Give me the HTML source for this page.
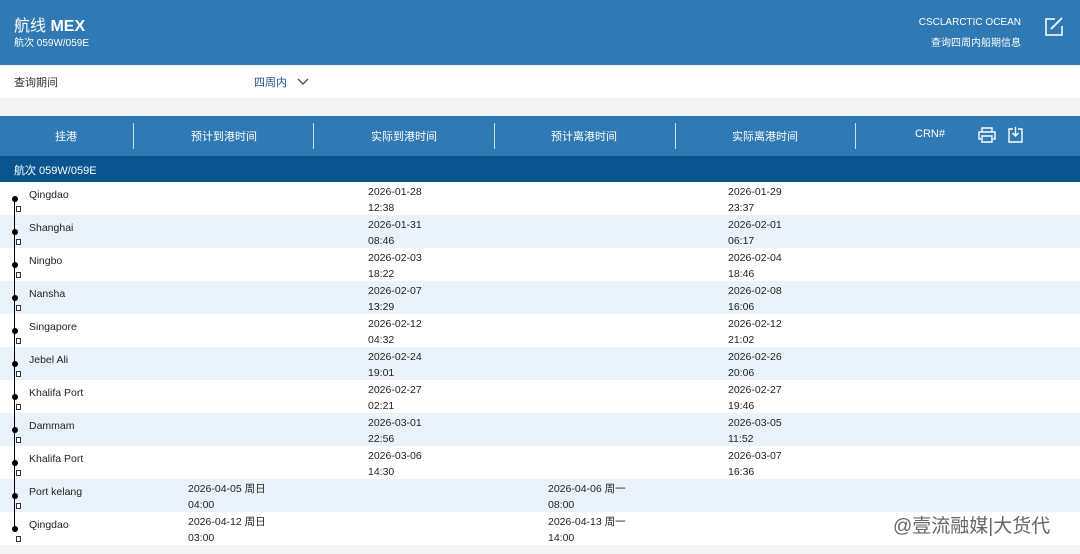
<!DOCTYPE html>
<html><head><meta charset="utf-8"><style>
*{margin:0;padding:0;box-sizing:border-box}
body{width:1080px;height:554px;overflow:hidden;background:#f3f4f6;font-family:"Liberation Sans","Noto Sans CJK SC",sans-serif;position:relative}
.hdr{position:absolute;left:0;top:0;width:1080px;height:65px;background:#2f79b4;color:#fff}
.q{position:absolute;top:66px;left:0;width:1080px;height:32px;background:#fff;font-size:11px;color:#333}
.th{position:absolute;top:116px;left:0;width:1080px;height:40px;background:#2f79b4;color:#fff;font-size:11px}
.th span{position:absolute;top:12px;transform:translateX(-50%)}
.sep{position:absolute;top:7px;width:1px;height:26px;background:#cfe0f0}
.vb{position:absolute;top:156px;left:0;width:1080px;height:26px;background:#0b558f;color:#fff;font-size:11px;padding:6px 14px}
.row{position:absolute;left:0;width:1080px;height:33px;font-size:10.5px;color:#222}
.row .p{position:absolute;left:29px;top:7px}
.row .t{position:absolute;top:2px;line-height:16px}
.dot{position:absolute;left:12px;top:14px;width:6px;height:6px;border-radius:50%;background:#000;z-index:3}
.sq{position:absolute;left:16px;top:24px;width:5px;height:6px;border:1px solid #333;background:#fff}
.line{position:absolute;left:14px;top:197px;width:1px;height:331px;background:#000;z-index:5}
</style></head><body>
<div class="hdr">
<div style="position:absolute;left:14px;top:12px;font-size:16px">航线 <b>MEX</b></div>
<div style="position:absolute;left:14px;top:34px;font-size:10px">航次 059W/059E</div>
<div style="position:absolute;right:59px;top:17px;font-size:10px">CSCLARCTIC OCEAN</div>
<div style="position:absolute;right:59px;top:34px;font-size:10px">查询四周内船期信息</div>
<svg style="position:absolute;left:1044px;top:16px" width="20" height="20" viewBox="0 0 20 20"><path d="M11 3H2v16h16v-9" fill="none" stroke="#fff" stroke-width="1.5"/><path d="M7 13l11-11" stroke="#fff" stroke-width="1.8"/></svg>
</div>
<div class="q"><span style="position:absolute;left:14px;top:8px">查询期间</span><span style="position:absolute;left:254px;top:8px;color:#1c4f8a">四周内</span>
<svg style="position:absolute;left:297px;top:12px" width="12" height="8"><path d="M1 1l5 5 5-5" fill="none" stroke="#555" stroke-width="1.4"/></svg></div>
<div class="th">
<span style="left:66px">挂港</span><span style="left:224px">预计到港时间</span><span style="left:404px">实际到港时间</span><span style="left:584px">预计离港时间</span><span style="left:765px">实际离港时间</span><span style="left:930px">CRN#</span>
<div class="sep" style="left:133px"></div><div class="sep" style="left:313px"></div><div class="sep" style="left:494px"></div><div class="sep" style="left:675px"></div><div class="sep" style="left:855px"></div>
<svg style="position:absolute;left:978px;top:10px" width="18" height="18" viewBox="0 0 18 18" fill="none" stroke="#fff" stroke-width="1.4"><path d="M4 6V2h10v4M3 13H1V6h16v7h-2M4 10h10v6H4z"/></svg>
<svg style="position:absolute;left:1008px;top:10px" width="15" height="17" viewBox="0 0 15 17" fill="none" stroke="#fff" stroke-width="1.4"><path d="M5 3H1v13h13V3h-4M7.5 1v9M4.5 7l3 3 3-3"/></svg>
</div>
<div class="vb">航次 059W/059E</div>
<div class="line"></div>
<div class="row" style="top:182px;background:#fff"><div class="dot"></div><div class="sq"></div><span class="p">Qingdao</span><span class="t" style="left:368px">2026-01-28<br>12:38</span><span class="t" style="left:728px">2026-01-29<br>23:37</span></div>
<div class="row" style="top:215px;background:#eaf2fc"><div class="dot"></div><div class="sq"></div><span class="p">Shanghai</span><span class="t" style="left:368px">2026-01-31<br>08:46</span><span class="t" style="left:728px">2026-02-01<br>06:17</span></div>
<div class="row" style="top:248px;background:#fff"><div class="dot"></div><div class="sq"></div><span class="p">Ningbo</span><span class="t" style="left:368px">2026-02-03<br>18:22</span><span class="t" style="left:728px">2026-02-04<br>18:46</span></div>
<div class="row" style="top:281px;background:#eaf2fc"><div class="dot"></div><div class="sq"></div><span class="p">Nansha</span><span class="t" style="left:368px">2026-02-07<br>13:29</span><span class="t" style="left:728px">2026-02-08<br>16:06</span></div>
<div class="row" style="top:314px;background:#fff"><div class="dot"></div><div class="sq"></div><span class="p">Singapore</span><span class="t" style="left:368px">2026-02-12<br>04:32</span><span class="t" style="left:728px">2026-02-12<br>21:02</span></div>
<div class="row" style="top:347px;background:#eaf2fc"><div class="dot"></div><div class="sq"></div><span class="p">Jebel Ali</span><span class="t" style="left:368px">2026-02-24<br>19:01</span><span class="t" style="left:728px">2026-02-26<br>20:06</span></div>
<div class="row" style="top:380px;background:#fff"><div class="dot"></div><div class="sq"></div><span class="p">Khalifa Port</span><span class="t" style="left:368px">2026-02-27<br>02:21</span><span class="t" style="left:728px">2026-02-27<br>19:46</span></div>
<div class="row" style="top:413px;background:#eaf2fc"><div class="dot"></div><div class="sq"></div><span class="p">Dammam</span><span class="t" style="left:368px">2026-03-01<br>22:56</span><span class="t" style="left:728px">2026-03-05<br>11:52</span></div>
<div class="row" style="top:446px;background:#fff"><div class="dot"></div><div class="sq"></div><span class="p">Khalifa Port</span><span class="t" style="left:368px">2026-03-06<br>14:30</span><span class="t" style="left:728px">2026-03-07<br>16:36</span></div>
<div class="row" style="top:479px;background:#eaf2fc"><div class="dot"></div><div class="sq"></div><span class="p">Port kelang</span><span class="t" style="left:188px">2026-04-05 周日<br>04:00</span><span class="t" style="left:548px">2026-04-06 周一<br>08:00</span></div>
<div class="row" style="top:512px;background:#fff"><div class="dot"></div><div class="sq"></div><span class="p">Qingdao</span><span class="t" style="left:188px">2026-04-12 周日<br>03:00</span><span class="t" style="left:548px">2026-04-13 周一<br>14:00</span></div>
<div style="position:absolute;left:893px;top:511px;font-size:19px;color:#666">@壹流融媒|大货代</div>
</body></html>
